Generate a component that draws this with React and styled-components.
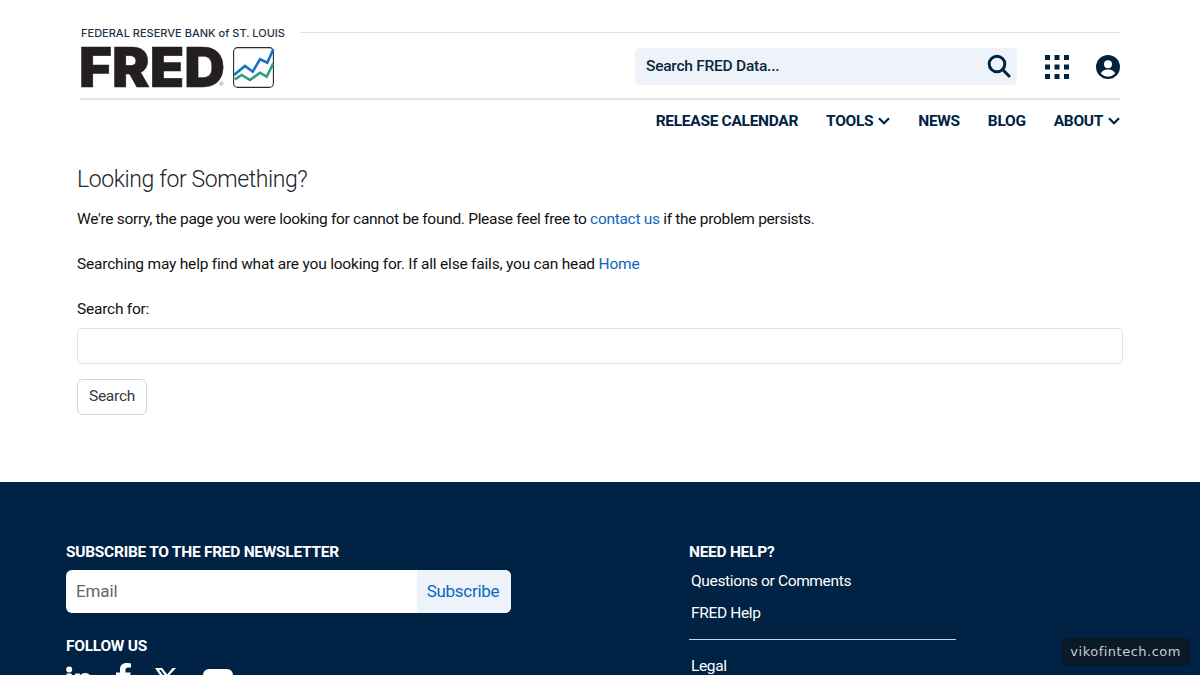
import React from 'react'
import styled, { createGlobalStyle } from 'styled-components'

const GlobalStyle = createGlobalStyle`
    html, body {
        margin: 0;
        height: 675px;
        overflow: hidden;
        background: #fff;
    }
    body {
        font-family: Roboto, "Liberation Sans", sans-serif;
        font-size: 15.500px;
        color: #212529;
    }
`

const Page = styled.div`
    width: 1200px;
    height: 675px;
    position: relative;
    overflow: hidden;
`

const Header = styled.header`
    height: 153px;
    padding: 26px 80px 0 80px;
    box-sizing: border-box;
`

const TopRow = styled.div`
    display: flex;
    height: 72px;
    border-bottom: 2px solid #dce7ed;
    box-sizing: content-box;
`

const Brand = styled.a`
    display: block;
    width: 220px;
    height: 72px;
    flex: none;

    svg {
        overflow: visible;
    }
`

const TopRight = styled.div`
    flex: 1;
    display: flex;
    flex-direction: column;
`

const Rule = styled.div`
    height: 1px;
    background: #d6e2e8;
    margin-top: 6px;
`

const Tools = styled.div`
    display: flex;
    align-items: center;
    margin-top: 15px;
    margin-left: 335px;
`

const SearchBar = styled.div`
    width: 382px;
    height: 37px;
    box-sizing: border-box;
    display: flex;
    align-items: center;
    justify-content: space-between;
    padding: 0 6px 2px 11px;
    background: #edf3f9;
    border-radius: 5px;
    font-size: 15.500px;
    font-weight: 500;
    letter-spacing: -0.240px;
    color: #0a2540;
`

const IconButton = styled.span`
    display: flex;
    margin-left: ${p => p.$gap}px;
    color: #00233f;
`

const Nav = styled.nav`
    display: flex;
    justify-content: flex-end;
    gap: 28px;
    margin-top: 12px;
`

const NavItem = styled.a`
    display: flex;
    align-items: center;
    gap: 5px;
    font-size: 15.500px;
    line-height: 19px;
    font-weight: 700;
    letter-spacing: -0.300px;
    color: #002244;
    white-space: nowrap;

    svg {
        margin-bottom: 2px;
    }
`

const Main = styled.main`
    height: 329px;
    padding: 0 77px;
    box-sizing: border-box;
`

const Title = styled.h1`
    margin: 0;
    padding-top: 12px;
    font-size: 23px;
    line-height: 29px;
    font-weight: 300;
    letter-spacing: -0.400px;
    color: #212529;
`

const Text = styled.p`
    margin: ${p => p.$top}px 0 0 0;
    font-size: 15.500px;
    line-height: 19px;
    letter-spacing: ${p => p.$spacing}px;
    color: #111;
`

const Link = styled.a`
    color: #0b66c3;
`

const SearchInput = styled.div`
    width: 1046px;
    height: 36px;
    margin-top: 9px;
    box-sizing: border-box;
    background: #fff;
    border: 1px solid #dee2e6;
    border-radius: 6px;
`

const SearchButton = styled.button`
    display: block;
    width: 70px;
    height: 36px;
    margin-top: 15px;
    padding: 0 0 2px 0;
    box-sizing: border-box;
    font-family: inherit;
    font-size: 15.500px;
    letter-spacing: -0.250px;
    color: #343a40;
    background: #fff;
    border: 1px solid #ced4da;
    border-radius: 6px;
`

const Footer = styled.footer`
    height: 193px;
    background: #002244;
    padding: 61px 0 0 66px;
    box-sizing: border-box;
    display: flex;
    color: #fff;
`

const LeftCol = styled.div`
    width: 623px;
    flex: none;
`

const RightCol = styled.div`
    width: 267px;
    flex: none;
`

const FootTitle = styled.div`
    font-size: 15.500px;
    line-height: 19px;
    font-weight: 700;
    letter-spacing: -0.270px;
    margin-top: ${p => p.$top || 0}px;
`

const SubscribeBox = styled.div`
    display: flex;
    width: 445px;
    height: 43px;
    margin-top: 8px;
    border-radius: 6px;
    overflow: hidden;
    background: #fff;
`

const EmailField = styled.div`
    flex: 1;
    padding-left: 10px;
    font-size: 17px;
    line-height: 43px;
    letter-spacing: -0.100px;
    color: #666;
`

const SubscribeButton = styled.div`
    width: 92px;
    padding-right: 2px;
    text-align: center;
    font-size: 17px;
    line-height: 43px;
    letter-spacing: -0.280px;
    color: #0b66c3;
    background: #edf3f9;
`

const Socials = styled.div`
    display: flex;
    align-items: flex-start;
    margin-top: 7px;
    gap: 23px;
`

const FootLink = styled.a`
    display: block;
    padding-left: 2px;
    font-size: 15.500px;
    line-height: 19px;
    letter-spacing: -0.350px;
    color: #fff;
    margin-top: ${p => p.$top}px;
`

const FootRule = styled.div`
    height: 1px;
    background: #c9d3de;
    margin-top: 16px;
`

const Watermark = styled.div`
    position: absolute;
    right: 10px;
    bottom: 9px;
    height: 28px;
    padding: 0 9px 0 8px;
    background: #0b1a28;
    color: #c8ccd1;
    font-family: "DejaVu Sans", sans-serif;
    font-size: 13px;
    line-height: 28px;
    letter-spacing: 0.500px;
`

const Chevron = () => (
    <svg width="12" height="8" viewBox="0 0 12 8" fill="none" stroke="currentColor" strokeWidth="2.200">
        <path d="M1 1.200l5 5 5-5" />
    </svg>
)

const Logo = () => (
    <svg width="220" height="72" viewBox="0 0 220 72">
        <text x="1" y="11" textLength="204" lengthAdjust="spacingAndGlyphs" fontFamily="Inter, sans-serif" fontSize="10.600" fontWeight="500" fill="#1f3347">FEDERAL RESERVE BANK of ST. LOUIS</text>
        <text x="-1" y="61" textLength="146" lengthAdjust="spacingAndGlyphs" fontFamily="Inter, sans-serif" fontSize="55" fontWeight="900" fill="#231f20" stroke="#231f20" strokeWidth="0.600">FRED</text>
        <text x="139" y="60" fontFamily="'Liberation Sans', sans-serif" fontSize="6" fill="#777">®</text>
        <rect x="153.600" y="21.600" width="39.800" height="39.800" rx="4" fill="#fff" stroke="#2b2b2b" strokeWidth="1.100" />
        <path d="M154 49l11-9 7.700 5.700 7.300-12.400 7.300 3.400 6-13.400" fill="none" stroke="#1a70c4" strokeWidth="2.600" />
        <path d="M155 53.300l6.700-4.300 8.300 5 10-7.300 6.700 4 6.600-13.400" fill="none" stroke="#2e9a80" strokeWidth="2.600" />
    </svg>
)

const SearchIcon = () => (
    <svg width="24" height="24" viewBox="0 0 24 24" fill="none" stroke="#00233f" strokeWidth="3" strokeLinecap="round">
        <circle cx="10" cy="10" r="7.800" />
        <path d="M15.800 15.800l6.200 6.200" />
    </svg>
)

const GridIcon = () => (
    <svg width="24" height="24" viewBox="0 0 24 24" fill="#00233f">
        {[0, 9.500, 19].map(y =>
            [0, 9.500, 19].map(x => <rect key={`${x}-${y}`} x={x} y={y} width="5" height="5" />)
        )}
    </svg>
)

const UserIcon = () => (
    <svg width="24" height="24" viewBox="0 0 24 24">
        <circle cx="12" cy="12" r="12" fill="#00233f" />
        <circle cx="12" cy="9.200" r="4" fill="#fff" />
        <path d="M4.800 18.600c1-3 3.600-4.200 7.200-4.200s6.200 1.200 7.200 4.200a10 10 0 0 1-14.400 0z" fill="#fff" />
    </svg>
)

const LinkedIn = () => (
    <svg width="26" height="26" viewBox="0 0 26 26" fill="#fff">
        <circle cx="3.200" cy="6.500" r="3" />
        <rect x="0.500" y="10.500" width="5.200" height="15" />
        <path d="M9 10.500h5v2c1-1.400 2.800-2.500 5-2.500 4.400 0 6.500 2.800 6.500 7v8.500h-5v-7.500c0-2-.6-3.500-2.700-3.500s-3.800 1.500-3.800 3.500v7.500h-5z" />
    </svg>
)

const Facebook = () => (
    <svg width="17" height="26" viewBox="0 0 17 26" fill="#fff">
        <path d="M5 26V14H1V9.500h4V6.500C5 2.300 7.500 0 11.500 0c1.800 0 3.500.3 4.500.4v4h-2.800c-2 0-2.700 1.200-2.700 2.500v2.600h5.200l-.8 4.500h-4.400v12z" />
    </svg>
)

const XLogo = () => (
    <svg width="25" height="26" viewBox="1 0 25 26" fill="#fff">
        <path d="M18.500 5h3.500l-7.600 8.200L23.500 26h-7l-5.500-7.300L4.800 26H1.300l8.100-8.800L1 5h7.200l5 6.600zM17.300 24h1.900L7 6.900H5z" />
    </svg>
)

const YouTube = () => (
    <svg width="30" height="26" viewBox="0 0 30 26">
        <rect x="0" y="6" width="30" height="22" rx="6" fill="#fff" />
    </svg>
)

const App = () => (
    <Page>
        <GlobalStyle />
        <Header>
            <TopRow>
                <Brand><Logo /></Brand>
                <TopRight>
                    <Rule />
                    <Tools>
                        <SearchBar>Search FRED Data...<SearchIcon /></SearchBar>
                        <IconButton $gap={28}><GridIcon /></IconButton>
                        <IconButton $gap={27}><UserIcon /></IconButton>
                    </Tools>
                </TopRight>
            </TopRow>
            <Nav>
                <NavItem>RELEASE CALENDAR</NavItem>
                <NavItem>TOOLS <Chevron /></NavItem>
                <NavItem>NEWS</NavItem>
                <NavItem>BLOG</NavItem>
                <NavItem>ABOUT <Chevron /></NavItem>
            </Nav>
        </Header>
        <Main>
            <Title>Looking for Something?</Title>
            <Text $top={16} $spacing={-0.3}>We're sorry, the page you were looking for cannot be found. Please feel free to <Link>contact us</Link> if the problem persists.</Text>
            <Text $top={26} $spacing={-0.2}>Searching may help find what are you looking for. If all else fails, you can head <Link>Home</Link></Text>
            <Text $top={26} $spacing={-0.24}>Search for:</Text>
            <SearchInput />
            <SearchButton>Search</SearchButton>
        </Main>
        <Footer>
            <LeftCol>
                <FootTitle>SUBSCRIBE TO THE FRED NEWSLETTER</FootTitle>
                <SubscribeBox>
                    <EmailField>Email</EmailField>
                    <SubscribeButton>Subscribe</SubscribeButton>
                </SubscribeBox>
                <FootTitle $top={24}>FOLLOW US</FootTitle>
                <Socials>
                    <LinkedIn />
                    <Facebook />
                    <XLogo />
                    <YouTube />
                </Socials>
            </LeftCol>
            <RightCol>
                <FootTitle>NEED HELP?</FootTitle>
                <FootLink $top={10}>Questions or Comments</FootLink>
                <FootLink $top={13}>FRED Help</FootLink>
                <FootRule />
                <FootLink $top={17}>Legal</FootLink>
            </RightCol>
        </Footer>
        <Watermark>vikofintech.com</Watermark>
    </Page>
)

export default App
